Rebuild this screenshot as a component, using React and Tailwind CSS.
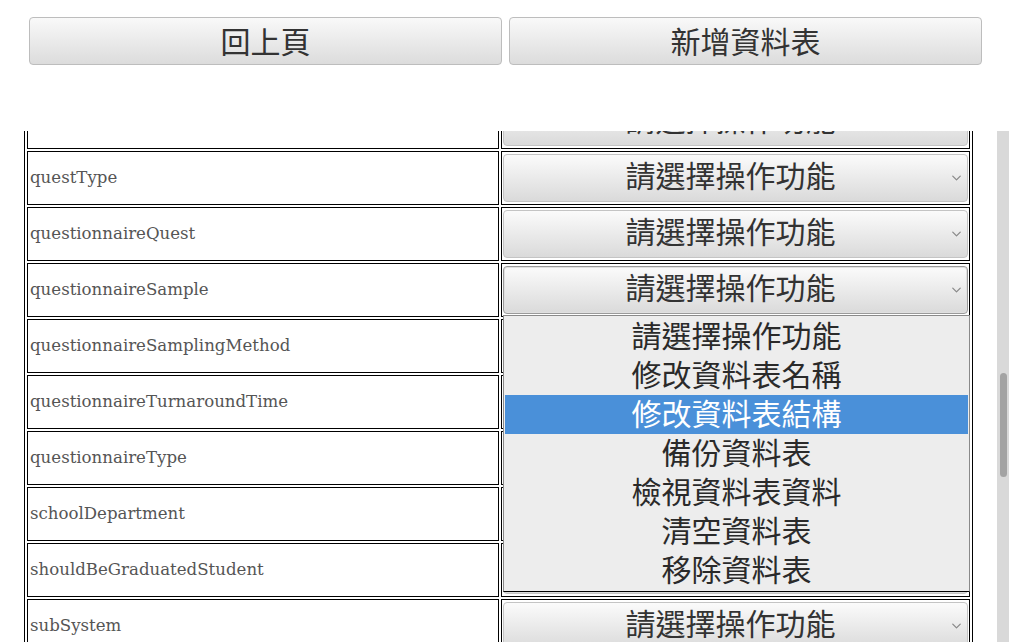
import React from "react";
import { ChevronDown } from "lucide-react";

const rows = [
  "questCategory",
  "questType",
  "questionnaireQuest",
  "questionnaireSample",
  "questionnaireSamplingMethod",
  "questionnaireTurnaroundTime",
  "questionnaireType",
  "schoolDepartment",
  "shouldBeGraduatedStudent",
  "subSystem",
  "systemLog",
];

const options = [
  "請選擇操作功能",
  "修改資料表名稱",
  "修改資料表結構",
  "備份資料表",
  "檢視資料表資料",
  "清空資料表",
  "移除資料表",
];

const cjk = { fontFamily: '"Noto Sans CJK TC", "Noto Sans", sans-serif' };

const FakeSelect = ({ focused }) => (
  <div
    className={
      "relative flex h-[48px] w-full items-center justify-center rounded-[4px] border bg-gradient-to-b from-[#fbfbfb] to-[#dadada] pl-2 pr-[18px] text-[30px] leading-none text-[#333] " +
      (focused ? "border-[#9a9a9a] shadow-[inset_0_0_0_1px_#e0e0e0]" : "border-[#c4c4c4]")
    }
    style={cjk}
  >
    <span className="-mt-[9px]">請選擇操作功能</span>
    <ChevronDown className="absolute right-[3px] top-1/2 h-[15px] w-[15px] -translate-y-1/2 text-[#8a8a8a]" strokeWidth={2} />
  </div>
);

const HeaderButton = ({ children }) => (
  <button
    type="button"
    className="flex h-[48px] flex-1 items-center justify-center rounded-[4px] border border-[#bdbdbd] bg-gradient-to-b from-[#f9f9f9] to-[#dcdcdc] text-[30px] leading-none text-[#333]"
    style={cjk}
  >
    <span className="-mt-[3px]">{children}</span>
  </button>
);

export default function App() {
  return (
    <div className="h-[642px] w-[1011px] overflow-hidden bg-white">
      <div className="flex h-[131px] gap-[7px] px-[29px] pt-[17px]">
        <HeaderButton>回上頁</HeaderButton>
        <HeaderButton>新增資料表</HeaderButton>
      </div>

      <div className="flex h-[511px]">
        <div className="relative flex-1 overflow-hidden">
          <div className="-mt-[39px] ml-[24px] w-[949px] border border-black p-[2px]">
            <div className="flex flex-col gap-[2px]">
              {rows.map((name) => (
                <div key={name} className="flex gap-[2px]">
                  <div
                    className="flex h-[54px] w-[472px] items-center border border-black pl-[2px] text-[16.6px] text-[#555]"
                    style={{ fontFamily: '"DejaVu Serif", serif' }}
                  >
                    {name}
                  </div>
                  <div className="flex h-[54px] w-[469px] items-center border border-black px-[1px]">
                    <FakeSelect focused={name === "questionnaireSample"} />
                  </div>
                </div>
              ))}
            </div>
          </div>

          {/* open dropdown list */}
          <div
            className="absolute left-[503px] top-[184px] w-[467px] border border-[#8a8a8a] border-b-black bg-[#ededed] p-[1px] text-[30px] leading-none text-[#2a2a2a]"
            style={cjk}
          >
            {options.map((o) => (
              <div
                key={o}
                className={
                  "flex h-[39px] items-center justify-center " +
                  (o === "修改資料表結構" ? "bg-[#4a90d9] text-white" : "")
                }
              >
                <span className="-mt-[5px]">{o}</span>
              </div>
            ))}
          </div>
        </div>

        <div className="mr-[2px] w-[12px] bg-[#d9d9d9] pt-[242px]">
          <div className="mx-auto h-[104px] w-[7px] rounded-full bg-[#a3a3a3]" />
        </div>
      </div>
    </div>
  );
}
